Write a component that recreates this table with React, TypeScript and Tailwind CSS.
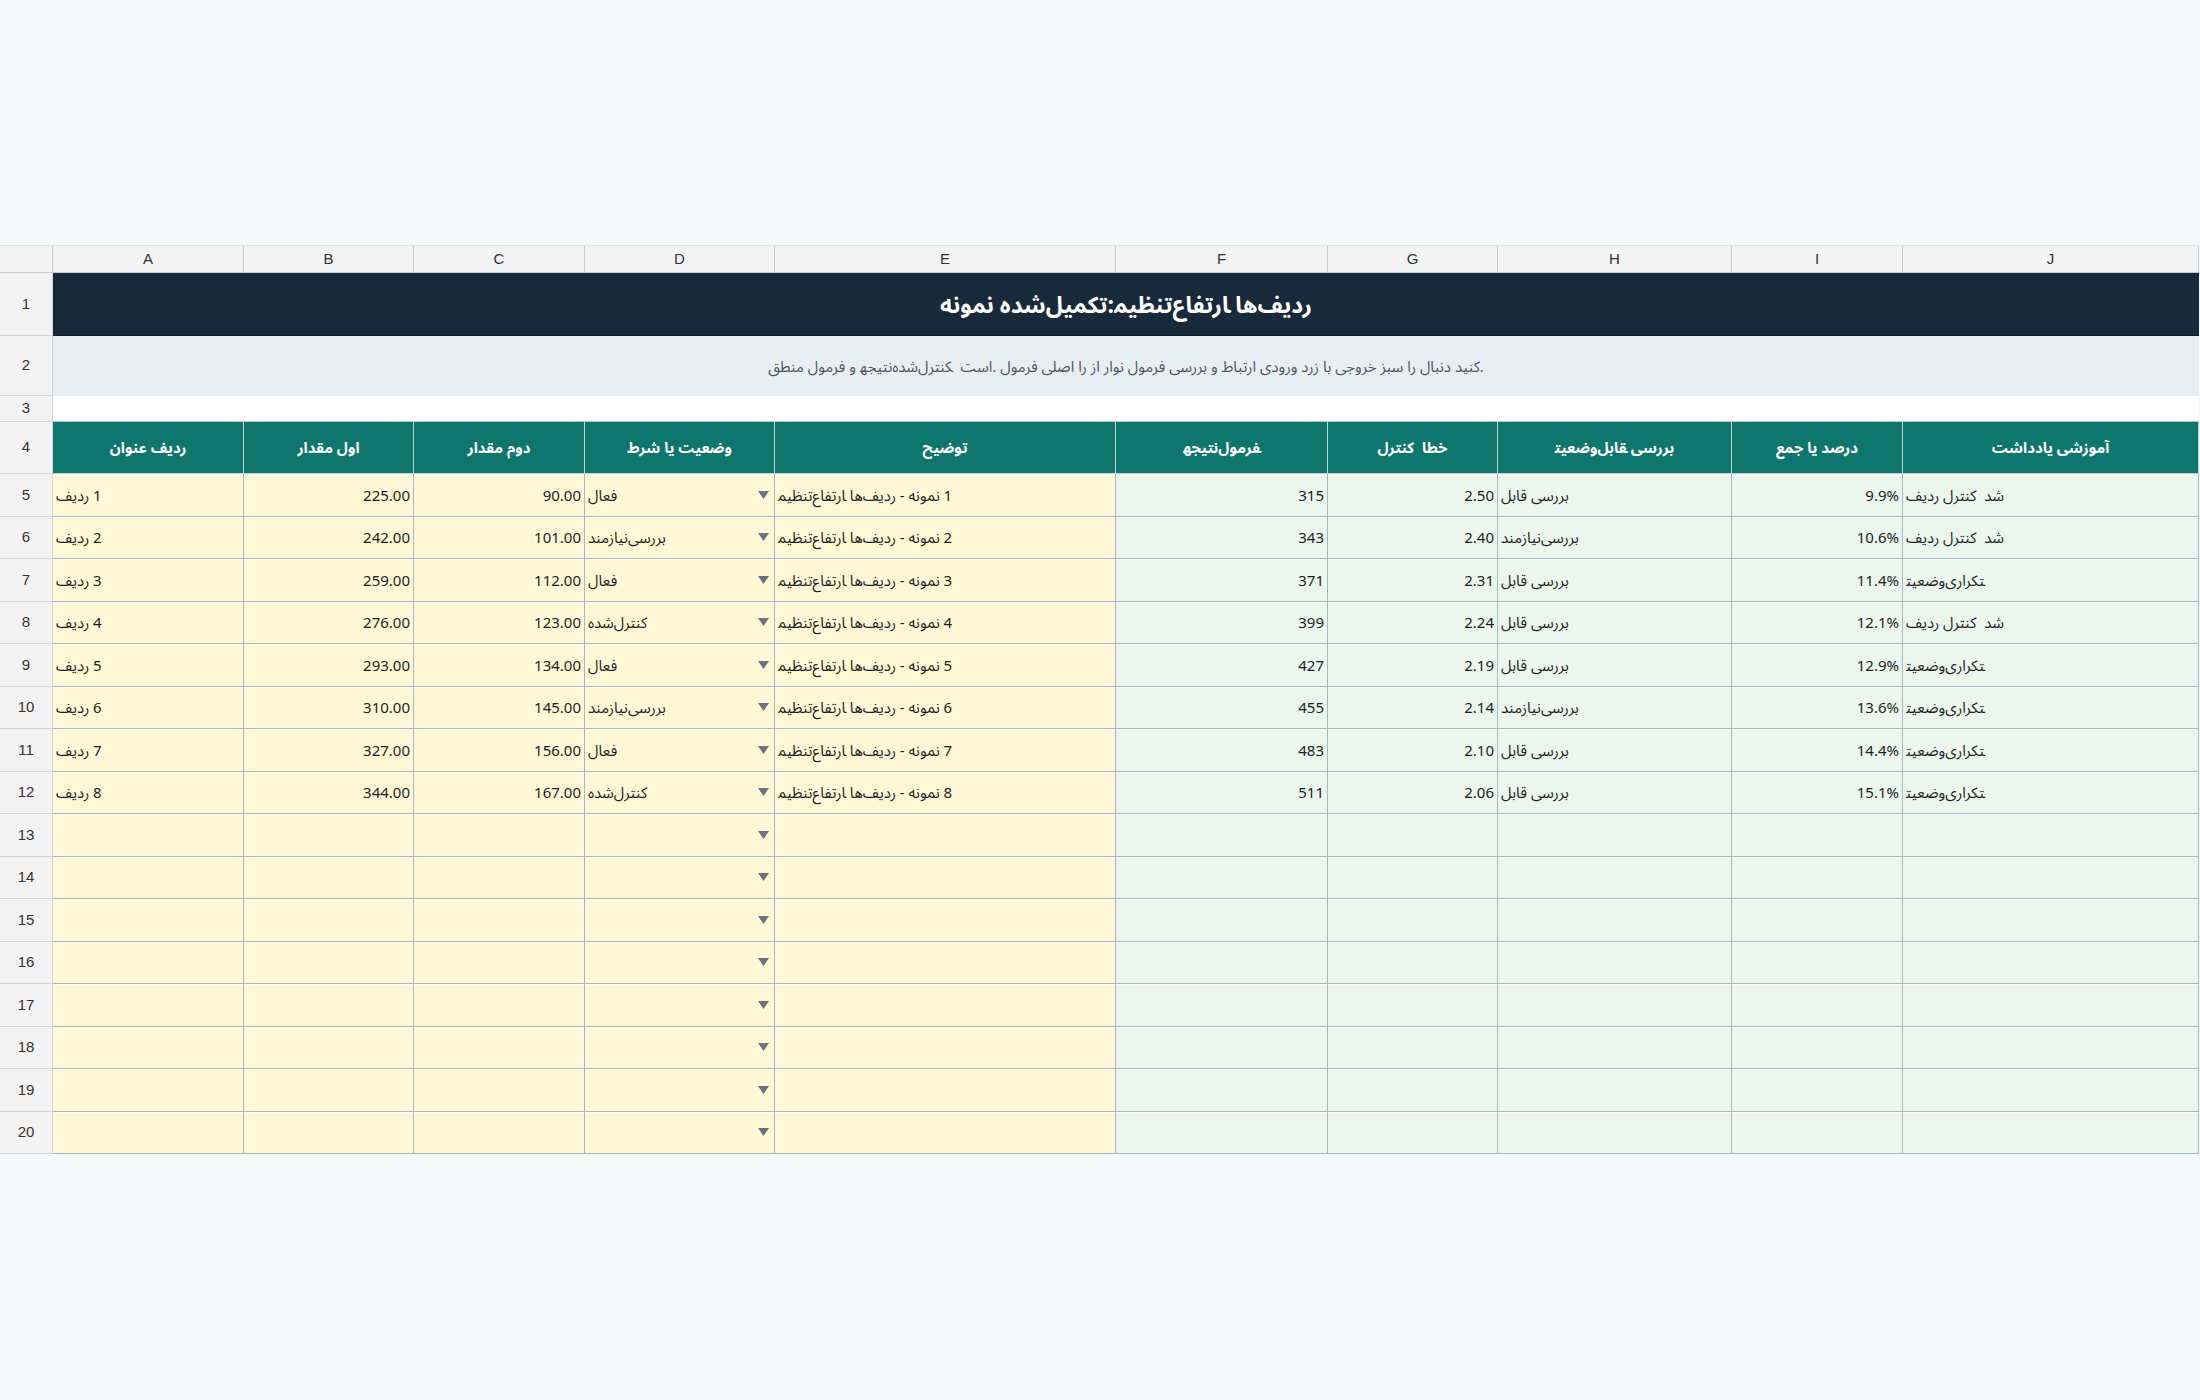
import React from "react";

// Persian text is shown word by word from left to right in the sheet,
// so each word gets its own RTL run separated by LRM marks.
// " " keeps a space, "+" puts two words right against each other.
const LRM = "\u200E";
function vis(s: string) {
  const parts = s.split(/( +|\+)/);
  let out = "";
  for (let i = 0; i < parts.length; i++) {
    const p = parts[i];
    if (p === "+") out += LRM;
    else if (/^ +$/.test(p)) out += LRM + p;
    else out += p;
  }
  return out;
}

const COLS =
  "grid grid-cols-[53px_191px_170px_171px_190px_341px_212px_170px_234px_171px_296px]";
const LETTERS = ["A", "B", "C", "D", "E", "F", "G", "H", "I", "J"];

const HEADERS = [
  "عنوان ردیف",
  "مقدار اول",
  "مقدار دوم",
  "شرط یا وضعیت",
  "توضیح",
  "نتیجه+فرمول",
  "کنترل  خطا",
  "وضعیت+قابل بررسی",
  "جمع یا درصد",
  "یادداشت آموزشی",
];

const STATUS = ["فعال", "نیازمند+بررسی", "فعال", "کنترل‌شده", "فعال", "نیازمند+بررسی", "فعال", "کنترل‌شده"];
const CHECK = ["قابل بررسی", "نیازمند+بررسی", "قابل بررسی", "قابل بررسی", "قابل بررسی", "نیازمند+بررسی", "قابل بررسی", "قابل بررسی"];
const NOTE = [
  "ردیف کنترل  شد",
  "ردیف کنترل  شد",
  "وضعیت+تکراری",
  "ردیف کنترل  شد",
  "وضعیت+تکراری",
  "وضعیت+تکراری",
  "وضعیت+تکراری",
  "وضعیت+تکراری",
];
const GVALS = ["2.50", "2.40", "2.31", "2.24", "2.19", "2.14", "2.10", "2.06"];
const PCT = ["9.9%", "10.6%", "11.4%", "12.1%", "12.9%", "13.6%", "14.4%", "15.1%"];

interface Row {
  a: string;
  b: string;
  c: string;
  d: string;
  e: string;
  f: string;
  g: string;
  h: string;
  i: string;
  j: string;
}

const rows: Row[] = Array.from({ length: 16 }, (_, k) => {
  if (k >= 8) return { a: "", b: "", c: "", d: "", e: "", f: "", g: "", h: "", i: "", j: "" };
  const n = k + 1;
  return {
    a: vis(`ردیف ${n}`),
    b: (225 + 17 * k).toFixed(2),
    c: (90 + 11 * k).toFixed(2),
    d: vis(STATUS[k]),
    e: vis(`تنظیم+ارتفاع ردیف‌ها - نمونه ${n}`),
    f: String(315 + 28 * k),
    g: GVALS[k],
    h: vis(CHECK[k]),
    i: PCT[k],
    j: vis(NOTE[k]),
  };
});

const font = "font-['Noto_Sans','Noto_Sans_Arabic','DejaVu_Sans',sans-serif]";
const gridFont = "font-['Liberation_Sans',Arial,sans-serif]";

function RowNum({ n, h }: { n: number; h: string }) {
  return (
    <div
      className={`${h} ${gridFont} flex items-center justify-center bg-[#f3f3f3] border-r border-b border-[#d2d7db] text-[15px] text-[#333]`}
    >
      {n}
    </div>
  );
}

function Arrow() {
  return (
    <svg width="11" height="8" viewBox="0 0 11 8" className="shrink-0 mr-[2px]">
      <polygon points="0,0 11,0 5.5,8" fill="#6b7280" />
    </svg>
  );
}

export default function App() {
  const cell =
    "h-[42.5px] border-r border-b border-[#a9b7c2] shadow-[inset_0_1px_0_#ffffffaa] px-[3px] flex items-center text-[15px] text-[#1e1e1e] whitespace-pre";
  const yellow = `${cell} bg-[#fff7d6]`;
  const green = `${cell} bg-[#eaf6ee]`;

  return (
    <div className={`min-h-screen w-[2200px] bg-[#f6f9fa] pt-[245px] ${font}`}>
      <div className={`${COLS} w-[2199px] border-t border-[#dfe3e6]`}>
        {/* column letters */}
        <div className="h-[27px] bg-[#f3f3f3] border-r border-b border-[#c6cbcf]" />
        {LETTERS.map((l) => (
          <div
            key={l}
            className={`h-[27px] ${gridFont} flex items-center justify-center bg-[#f4f4f4] border-r border-b border-[#c6cbcf] text-[15px] text-[#333]`}
          >
            {l}
          </div>
        ))}

        {/* row 1: title */}
        <RowNum n={1} h="h-[63px]" />
        <div className="col-span-10 h-[63px] flex items-center justify-center bg-[#182a3a] border-b border-[#0f1b27] text-white text-[23px] font-bold whitespace-pre">
          {vis("نمونه تکمیل‌شده+:+تنظیم+ارتفاع ردیف‌ها")}
        </div>

        {/* row 2: description */}
        <RowNum n={2} h="h-[60px]" />
        <div className="col-span-10 h-[60px] flex items-center justify-center bg-[#e9eef3] text-[15px] text-[#4a5563] whitespace-pre">
          {vis(
            "منطق فرمول و نتیجه+کنترل‌شده  است+. فرمول اصلی را از نوار فرمول بررسی و ارتباط ورودی زرد با خروجی سبز را دنبال کنید+."
          )}
        </div>

        {/* row 3: spacer */}
        <RowNum n={3} h="h-[26px]" />
        <div className="col-span-10 h-[26px] bg-white border-b border-[#b3c0c9]" />

        {/* row 4: headers */}
        <RowNum n={4} h="h-[52px]" />
        {HEADERS.map((t, k) => (
          <div
            key={k}
            className="h-[52px] flex items-center justify-center bg-[#0f766d] border-r border-b border-[#c0d1d4] text-white text-[15px] font-bold whitespace-pre"
          >
            {vis(t)}
          </div>
        ))}

        {/* rows 5-20 */}
        {rows.map((r, k) => (
          <React.Fragment key={k}>
            <RowNum n={k + 5} h="h-[42.5px]" />
            <div className={yellow}>{r.a}</div>
            <div className={`${yellow} justify-end`}>{r.b}</div>
            <div className={`${yellow} justify-end`}>{r.c}</div>
            <div className={`${yellow} justify-between`}>
              <span>{r.d}</span>
              <Arrow />
            </div>
            <div className={yellow}>{r.e}</div>
            <div className={`${green} justify-end`}>{r.f}</div>
            <div className={`${green} justify-end`}>{r.g}</div>
            <div className={green}>{r.h}</div>
            <div className={`${green} justify-end`}>{r.i}</div>
            <div className={green}>{r.j}</div>
          </React.Fragment>
        ))}
      </div>
    </div>
  );
}
